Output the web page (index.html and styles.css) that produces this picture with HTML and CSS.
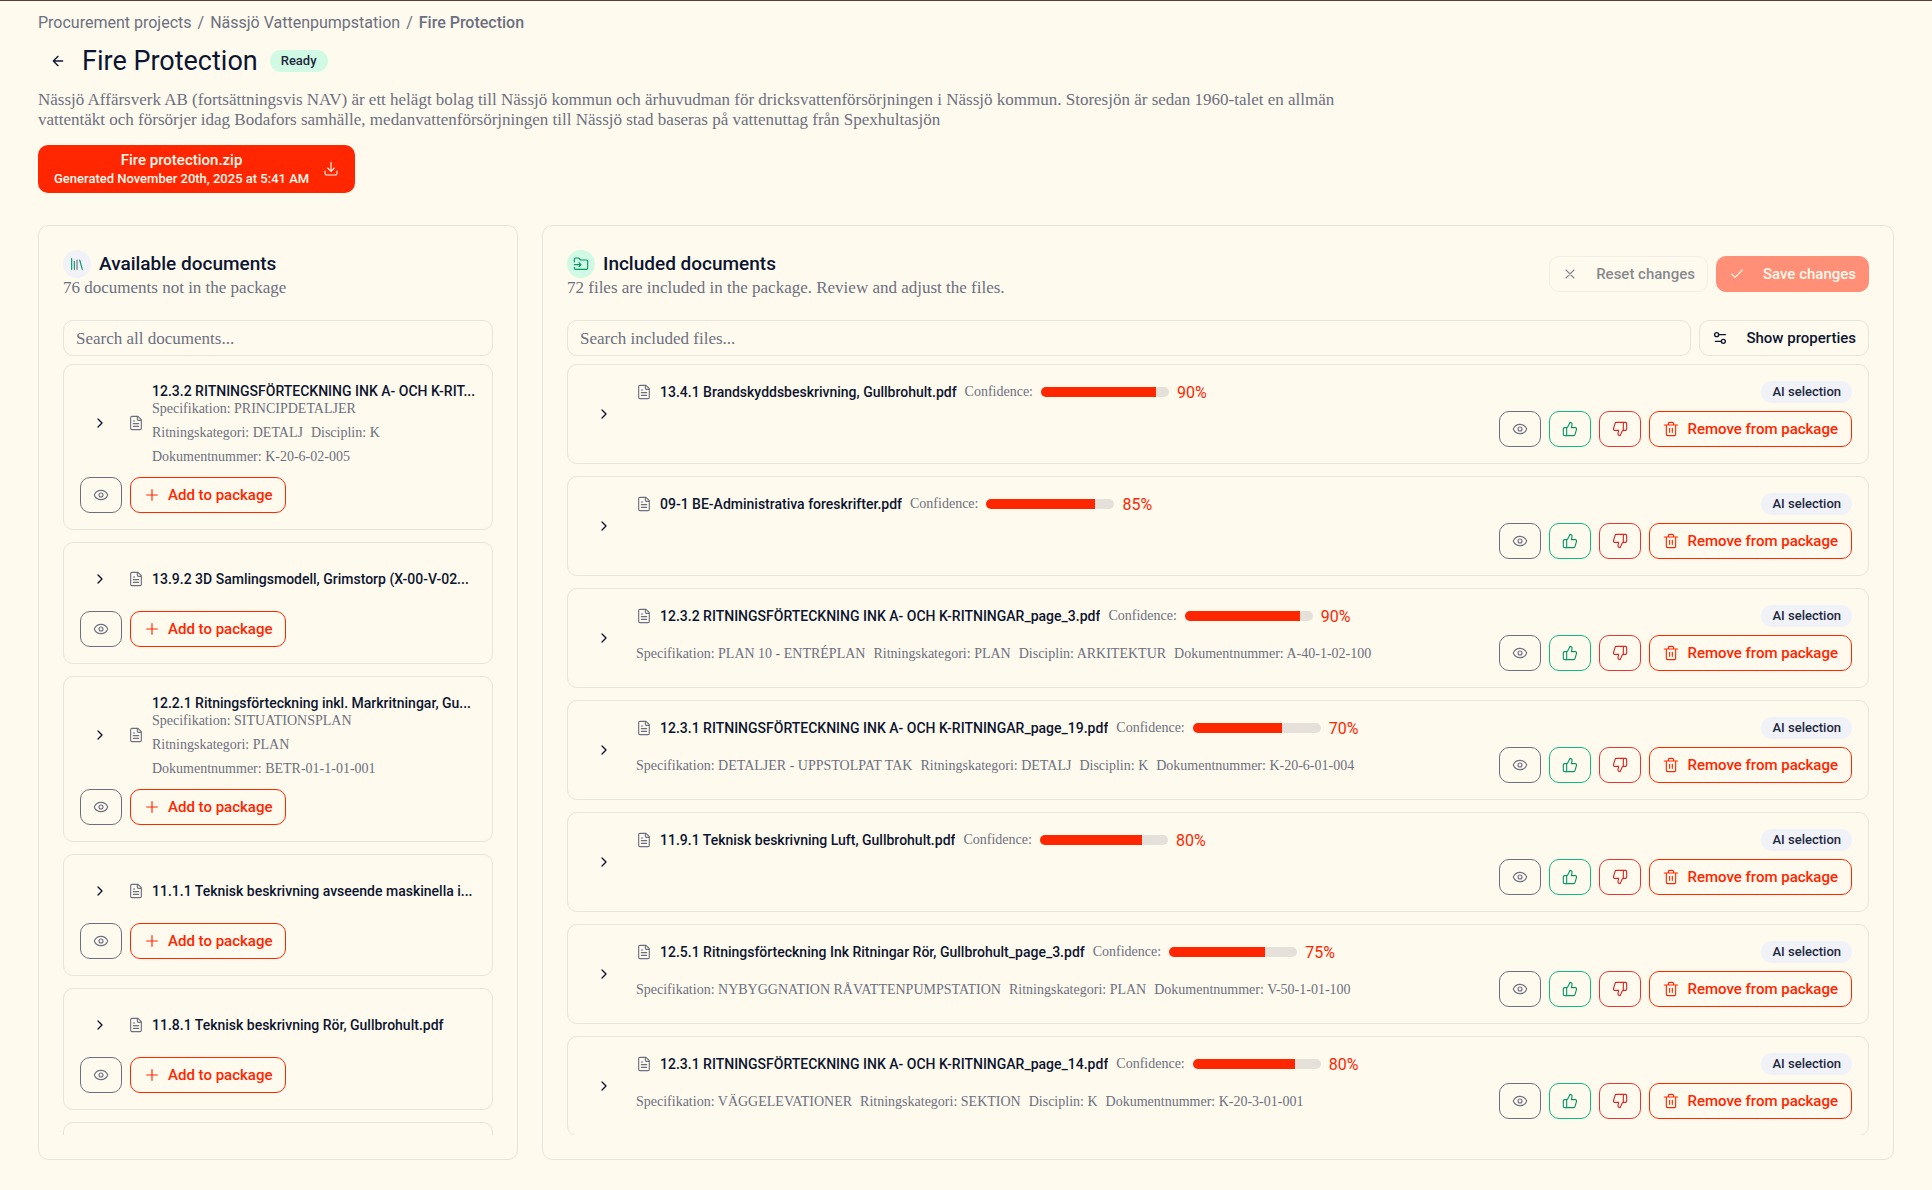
FILE: index.html
```html
<!DOCTYPE html>
<html lang="en">
<head>
    <meta charset="utf-8">
    <meta name="viewport" content="width=device-width, initial-scale=1.0">
    <title>Fire Protection</title>
    <link rel="stylesheet" href="styles.css">
</head>
<body>

<!-- icon sprite -->
<svg class="sprite" aria-hidden="true">
    <symbol id="i-back" viewBox="0 0 24 24"><path d="m12 19-7-7 7-7M19 12H5"/></symbol>
    <symbol id="i-download" viewBox="0 0 24 24"><path d="M3 15v3.500a2.500 2.500 0 0 0 2.500 2.500h13a2.500 2.500 0 0 0 2.500-2.500V15M7 10.500l5 5 5-5M12 15V2"/></symbol>
    <symbol id="i-library" viewBox="0 0 24 24"><path d="m16 6 4 14M8 8v12M4 4v16"/><path d="M12 6v14" stroke="#6b7080"/></symbol>
    <symbol id="i-folder" viewBox="0 0 24 24"><path d="M2 9V5a2 2 0 0 1 2-2h3.900a2 2 0 0 1 1.690.900l.810 1.200a2 2 0 0 0 1.670.900H20a2 2 0 0 1 2 2v10a2 2 0 0 1-2 2H4a2 2 0 0 1-2-2v-1M2 13h10M9 16l3-3-3-3"/></symbol>
    <symbol id="i-x" viewBox="0 0 24 24"><path d="M18 6 6 18M6 6l12 12"/></symbol>
    <symbol id="i-check" viewBox="0 0 24 24"><path d="M20 6 9 17l-5-5"/></symbol>
    <symbol id="i-settings" viewBox="0 0 24 24"><path d="M20 7h-9M14 17H5"/><circle cx="17" cy="17" r="3"/><circle cx="7" cy="7" r="3"/></symbol>
    <symbol id="i-chevron" viewBox="0 0 24 24"><path d="m9 18 6-6-6-6"/></symbol>
    <symbol id="i-file" viewBox="0 0 24 24"><path d="M15 2H6a2 2 0 0 0-2 2v16a2 2 0 0 0 2 2h12a2 2 0 0 0 2-2V7ZM14 2v4a2 2 0 0 0 2 2h4M10 9H8M16 13H8M16 17H8"/></symbol>
    <symbol id="i-eye" viewBox="0 0 24 24"><path d="M2.060 12.350a1 1 0 0 1 0-.700 10.750 10.750 0 0 1 19.880 0 1 1 0 0 1 0 .700 10.750 10.750 0 0 1-19.880 0"/><circle cx="12" cy="12" r="3"/></symbol>
    <symbol id="i-plus" viewBox="0 0 24 24"><path d="M4 12h16M12 4v16"/></symbol>
    <symbol id="i-up" viewBox="0 0 24 24"><path d="M7 10v12M15 5.880 14 10h5.830a2 2 0 0 1 1.920 2.560l-2.330 8A2 2 0 0 1 17.500 22H4a2 2 0 0 1-2-2v-8a2 2 0 0 1 2-2h2.760a2 2 0 0 0 1.790-1.110L12 2a3.130 3.130 0 0 1 3 3.880Z"/></symbol>
    <symbol id="i-down" viewBox="0 0 24 24"><path d="M17 14V2M9 18.120 10 14H4.170a2 2 0 0 1-1.920-2.560l2.330-8A2 2 0 0 1 6.500 2H20a2 2 0 0 1 2 2v8a2 2 0 0 1-2 2h-2.760a2 2 0 0 0-1.790 1.110L12 22a3.130 3.130 0 0 1-3-3.880Z"/></symbol>
    <symbol id="i-trash" viewBox="0 0 24 24"><path d="M2 6h20M19 6v14a2 2 0 0 1-2 2H7a2 2 0 0 1-2-2V6M8 6V4a2 2 0 0 1 2-2h4a2 2 0 0 1 2 2v2M10 11v6M14 11v6"/></symbol>
</svg>

<div class="page">
    <nav class="breadcrumb" aria-label="Breadcrumb">
        <a href="#">Procurement projects</a>
        <span>/</span>
        <a href="#">Nässjö Vattenpumpstation</a>
        <span>/</span>
        <span class="current">Fire Protection</span>
    </nav>

    <header class="page-head">
        <button class="icon-btn" aria-label="Back"><svg class="icon"><use href="#i-back"/></svg></button>
        <h1>Fire Protection</h1>
        <span class="badge ready">Ready</span>
    </header>

    <p class="intro">Nässjö Affärsverk AB (fortsättningsvis NAV) är ett helägt bolag till Nässjö kommun och ärhuvudman för dricksvattenförsörjningen i Nässjö kommun. Storesjön är sedan 1960-talet en allmän vattentäkt och försörjer idag Bodafors samhälle, medanvattenförsörjningen till Nässjö stad baseras på vattenuttag från Spexhultasjön</p>

    <button class="zip">
        <span class="zip-text">
            <span class="zip-name">Fire protection.zip</span>
            <span class="zip-date">Generated November 20th, 2025 at 5:41 AM</span>
        </span>
        <svg class="icon"><use href="#i-download"/></svg>
    </button>

    <main class="panels">
        <section class="panel">
            <div class="panel-head">
                <div>
                    <h2><span class="circle"><svg class="icon"><use href="#i-library"/></svg></span>Available documents</h2>
                    <p>76 documents not in the package</p>
                </div>
            </div>
            <div class="tools">
                <input class="search" type="text" placeholder="Search all documents..." aria-label="Search all documents">
            </div>
            <div class="list">
                <article class="card">
                    <div class="doc">
                        <button class="icon-btn" aria-label="Expand"><svg class="icon"><use href="#i-chevron"/></svg></button>
                        <svg class="icon file"><use href="#i-file"/></svg>
                        <div class="doc-text">
                            <h3>12.3.2 RITNINGSFÖRTECKNING INK A- OCH K-RIT...</h3>
                            <div class="meta">
                                <span>Specifikation: PRINCIPDETALJER</span>
                                <span>Ritningskategori: DETALJ</span>
                                <span>Disciplin: K</span>
                                <span>Dokumentnummer: K-20-6-02-005</span>
                            </div>
                        </div>
                    </div>
                    <div class="actions">
                        <button class="btn view" aria-label="Preview"><svg class="icon"><use href="#i-eye"/></svg></button>
                        <button class="btn primary"><svg class="icon"><use href="#i-plus"/></svg>Add to package</button>
                    </div>
                </article>
                <article class="card">
                    <div class="doc">
                        <button class="icon-btn" aria-label="Expand"><svg class="icon"><use href="#i-chevron"/></svg></button>
                        <svg class="icon file"><use href="#i-file"/></svg>
                        <div class="doc-text">
                            <h3>13.9.2 3D Samlingsmodell, Grimstorp (X-00-V-02...</h3>
                        </div>
                    </div>
                    <div class="actions">
                        <button class="btn view" aria-label="Preview"><svg class="icon"><use href="#i-eye"/></svg></button>
                        <button class="btn primary"><svg class="icon"><use href="#i-plus"/></svg>Add to package</button>
                    </div>
                </article>
                <article class="card">
                    <div class="doc">
                        <button class="icon-btn" aria-label="Expand"><svg class="icon"><use href="#i-chevron"/></svg></button>
                        <svg class="icon file"><use href="#i-file"/></svg>
                        <div class="doc-text">
                            <h3>12.2.1 Ritningsförteckning inkl. Markritningar, Gu...</h3>
                            <div class="meta">
                                <span>Specifikation: SITUATIONSPLAN</span>
                                <span>Ritningskategori: PLAN</span>
                                <span>Dokumentnummer: BETR-01-1-01-001</span>
                            </div>
                        </div>
                    </div>
                    <div class="actions">
                        <button class="btn view" aria-label="Preview"><svg class="icon"><use href="#i-eye"/></svg></button>
                        <button class="btn primary"><svg class="icon"><use href="#i-plus"/></svg>Add to package</button>
                    </div>
                </article>
                <article class="card">
                    <div class="doc">
                        <button class="icon-btn" aria-label="Expand"><svg class="icon"><use href="#i-chevron"/></svg></button>
                        <svg class="icon file"><use href="#i-file"/></svg>
                        <div class="doc-text">
                            <h3>11.1.1 Teknisk beskrivning avseende maskinella i...</h3>
                        </div>
                    </div>
                    <div class="actions">
                        <button class="btn view" aria-label="Preview"><svg class="icon"><use href="#i-eye"/></svg></button>
                        <button class="btn primary"><svg class="icon"><use href="#i-plus"/></svg>Add to package</button>
                    </div>
                </article>
                <article class="card">
                    <div class="doc">
                        <button class="icon-btn" aria-label="Expand"><svg class="icon"><use href="#i-chevron"/></svg></button>
                        <svg class="icon file"><use href="#i-file"/></svg>
                        <div class="doc-text">
                            <h3>11.8.1 Teknisk beskrivning Rör, Gullbrohult.pdf</h3>
                        </div>
                    </div>
                    <div class="actions">
                        <button class="btn view" aria-label="Preview"><svg class="icon"><use href="#i-eye"/></svg></button>
                        <button class="btn primary"><svg class="icon"><use href="#i-plus"/></svg>Add to package</button>
                    </div>
                </article>
                <article class="card"></article>
            </div>
        </section>

        <section class="panel">
            <div class="panel-head">
                <div>
                    <h2><span class="circle green"><svg class="icon"><use href="#i-folder"/></svg></span>Included documents</h2>
                    <p>72 files are included in the package. Review and adjust the files.</p>
                </div>
                <div class="actions">
                    <button class="btn wide" disabled><svg class="icon"><use href="#i-x"/></svg>Reset changes</button>
                    <button class="btn wide save" disabled><svg class="icon"><use href="#i-check"/></svg>Save changes</button>
                </div>
            </div>
            <div class="tools">
                <input class="search" type="text" placeholder="Search included files..." aria-label="Search included files">
                <button class="btn wide"><svg class="icon bold"><use href="#i-settings"/></svg>Show properties</button>
            </div>
            <div class="list">
                <article class="card row">
                    <button class="icon-btn" aria-label="Expand"><svg class="icon"><use href="#i-chevron"/></svg></button>
                    <div class="info">
                        <div class="name">
                            <svg class="icon file"><use href="#i-file"/></svg>
                            <h3>13.4.1 Brandskyddsbeskrivning, Gullbrohult.pdf</h3>
                            <span class="conf">Confidence:</span>
                            <span class="bar"><span class="fill" style="width: 90%"></span></span>
                            <span class="pct">90%</span>
                        </div>
                    </div>
                    <div class="side">
                        <span class="badge">AI selection</span>
                        <div class="actions">
                            <button class="btn view" aria-label="Preview"><svg class="icon"><use href="#i-eye"/></svg></button>
                            <button class="btn up" aria-label="Good match"><svg class="icon"><use href="#i-up"/></svg></button>
                            <button class="btn down" aria-label="Bad match"><svg class="icon"><use href="#i-down"/></svg></button>
                            <button class="btn primary"><svg class="icon"><use href="#i-trash"/></svg>Remove from package</button>
                        </div>
                    </div>
                </article>
                <article class="card row">
                    <button class="icon-btn" aria-label="Expand"><svg class="icon"><use href="#i-chevron"/></svg></button>
                    <div class="info">
                        <div class="name">
                            <svg class="icon file"><use href="#i-file"/></svg>
                            <h3>09-1 BE-Administrativa foreskrifter.pdf</h3>
                            <span class="conf">Confidence:</span>
                            <span class="bar"><span class="fill" style="width: 85%"></span></span>
                            <span class="pct">85%</span>
                        </div>
                    </div>
                    <div class="side">
                        <span class="badge">AI selection</span>
                        <div class="actions">
                            <button class="btn view" aria-label="Preview"><svg class="icon"><use href="#i-eye"/></svg></button>
                            <button class="btn up" aria-label="Good match"><svg class="icon"><use href="#i-up"/></svg></button>
                            <button class="btn down" aria-label="Bad match"><svg class="icon"><use href="#i-down"/></svg></button>
                            <button class="btn primary"><svg class="icon"><use href="#i-trash"/></svg>Remove from package</button>
                        </div>
                    </div>
                </article>
                <article class="card row">
                    <button class="icon-btn" aria-label="Expand"><svg class="icon"><use href="#i-chevron"/></svg></button>
                    <div class="info">
                        <div class="name">
                            <svg class="icon file"><use href="#i-file"/></svg>
                            <h3>12.3.2 RITNINGSFÖRTECKNING INK A- OCH K-RITNINGAR_page_3.pdf</h3>
                            <span class="conf">Confidence:</span>
                            <span class="bar"><span class="fill" style="width: 90%"></span></span>
                            <span class="pct">90%</span>
                        </div>
                        <div class="meta">
                            <span>Specifikation: PLAN 10 - ENTRÉPLAN</span>
                            <span>Ritningskategori: PLAN</span>
                            <span>Disciplin: ARKITEKTUR</span>
                            <span>Dokumentnummer: A-40-1-02-100</span>
                        </div>
                    </div>
                    <div class="side">
                        <span class="badge">AI selection</span>
                        <div class="actions">
                            <button class="btn view" aria-label="Preview"><svg class="icon"><use href="#i-eye"/></svg></button>
                            <button class="btn up" aria-label="Good match"><svg class="icon"><use href="#i-up"/></svg></button>
                            <button class="btn down" aria-label="Bad match"><svg class="icon"><use href="#i-down"/></svg></button>
                            <button class="btn primary"><svg class="icon"><use href="#i-trash"/></svg>Remove from package</button>
                        </div>
                    </div>
                </article>
                <article class="card row">
                    <button class="icon-btn" aria-label="Expand"><svg class="icon"><use href="#i-chevron"/></svg></button>
                    <div class="info">
                        <div class="name">
                            <svg class="icon file"><use href="#i-file"/></svg>
                            <h3>12.3.1 RITNINGSFÖRTECKNING INK A- OCH K-RITNINGAR_page_19.pdf</h3>
                            <span class="conf">Confidence:</span>
                            <span class="bar"><span class="fill" style="width: 70%"></span></span>
                            <span class="pct">70%</span>
                        </div>
                        <div class="meta">
                            <span>Specifikation: DETALJER - UPPSTOLPAT TAK</span>
                            <span>Ritningskategori: DETALJ</span>
                            <span>Disciplin: K</span>
                            <span>Dokumentnummer: K-20-6-01-004</span>
                        </div>
                    </div>
                    <div class="side">
                        <span class="badge">AI selection</span>
                        <div class="actions">
                            <button class="btn view" aria-label="Preview"><svg class="icon"><use href="#i-eye"/></svg></button>
                            <button class="btn up" aria-label="Good match"><svg class="icon"><use href="#i-up"/></svg></button>
                            <button class="btn down" aria-label="Bad match"><svg class="icon"><use href="#i-down"/></svg></button>
                            <button class="btn primary"><svg class="icon"><use href="#i-trash"/></svg>Remove from package</button>
                        </div>
                    </div>
                </article>
                <article class="card row">
                    <button class="icon-btn" aria-label="Expand"><svg class="icon"><use href="#i-chevron"/></svg></button>
                    <div class="info">
                        <div class="name">
                            <svg class="icon file"><use href="#i-file"/></svg>
                            <h3>11.9.1 Teknisk beskrivning Luft, Gullbrohult.pdf</h3>
                            <span class="conf">Confidence:</span>
                            <span class="bar"><span class="fill" style="width: 80%"></span></span>
                            <span class="pct">80%</span>
                        </div>
                    </div>
                    <div class="side">
                        <span class="badge">AI selection</span>
                        <div class="actions">
                            <button class="btn view" aria-label="Preview"><svg class="icon"><use href="#i-eye"/></svg></button>
                            <button class="btn up" aria-label="Good match"><svg class="icon"><use href="#i-up"/></svg></button>
                            <button class="btn down" aria-label="Bad match"><svg class="icon"><use href="#i-down"/></svg></button>
                            <button class="btn primary"><svg class="icon"><use href="#i-trash"/></svg>Remove from package</button>
                        </div>
                    </div>
                </article>
                <article class="card row">
                    <button class="icon-btn" aria-label="Expand"><svg class="icon"><use href="#i-chevron"/></svg></button>
                    <div class="info">
                        <div class="name">
                            <svg class="icon file"><use href="#i-file"/></svg>
                            <h3>12.5.1 Ritningsförteckning Ink Ritningar Rör, Gullbrohult_page_3.pdf</h3>
                            <span class="conf">Confidence:</span>
                            <span class="bar"><span class="fill" style="width: 75%"></span></span>
                            <span class="pct">75%</span>
                        </div>
                        <div class="meta">
                            <span>Specifikation: NYBYGGNATION RÅVATTENPUMPSTATION</span>
                            <span>Ritningskategori: PLAN</span>
                            <span>Dokumentnummer: V-50-1-01-100</span>
                        </div>
                    </div>
                    <div class="side">
                        <span class="badge">AI selection</span>
                        <div class="actions">
                            <button class="btn view" aria-label="Preview"><svg class="icon"><use href="#i-eye"/></svg></button>
                            <button class="btn up" aria-label="Good match"><svg class="icon"><use href="#i-up"/></svg></button>
                            <button class="btn down" aria-label="Bad match"><svg class="icon"><use href="#i-down"/></svg></button>
                            <button class="btn primary"><svg class="icon"><use href="#i-trash"/></svg>Remove from package</button>
                        </div>
                    </div>
                </article>
                <article class="card row">
                    <button class="icon-btn" aria-label="Expand"><svg class="icon"><use href="#i-chevron"/></svg></button>
                    <div class="info">
                        <div class="name">
                            <svg class="icon file"><use href="#i-file"/></svg>
                            <h3>12.3.1 RITNINGSFÖRTECKNING INK A- OCH K-RITNINGAR_page_14.pdf</h3>
                            <span class="conf">Confidence:</span>
                            <span class="bar"><span class="fill" style="width: 80%"></span></span>
                            <span class="pct">80%</span>
                        </div>
                        <div class="meta">
                            <span>Specifikation: VÄGGELEVATIONER</span>
                            <span>Ritningskategori: SEKTION</span>
                            <span>Disciplin: K</span>
                            <span>Dokumentnummer: K-20-3-01-001</span>
                        </div>
                    </div>
                    <div class="side">
                        <span class="badge">AI selection</span>
                        <div class="actions">
                            <button class="btn view" aria-label="Preview"><svg class="icon"><use href="#i-eye"/></svg></button>
                            <button class="btn up" aria-label="Good match"><svg class="icon"><use href="#i-up"/></svg></button>
                            <button class="btn down" aria-label="Bad match"><svg class="icon"><use href="#i-down"/></svg></button>
                            <button class="btn primary"><svg class="icon"><use href="#i-trash"/></svg>Remove from package</button>
                        </div>
                    </div>
                </article>
            </div>
        </section>
    </main>
</div>

</body>
</html>
```
FILE: styles.css
```css
* {
    box-sizing: border-box;
}
body {
    margin: 0;
    background: #fffaee;
    color: #0c1530;
    font-family: "Roboto", "Liberation Sans", sans-serif;
    font-size: 15px;
}
h1, h2, h3, p {
    margin: 0;
    font-weight: 500;
}
button {
    font: inherit;
    color: inherit;
    background: none;
    border: 0;
    padding: 0;
    cursor: pointer;
}
.sprite {
    display: none;
}
.icon {
    width: 16px;
    height: 16px;
    flex: none;
    fill: none;
    stroke: currentColor;
    stroke-width: 1.7;
    stroke-linecap: round;
    stroke-linejoin: round;
}
.icon.bold, .icon-btn .icon {
    stroke-width: 2;
}

/* page: one screen high, the two lists take what is left */
.page {
    display: flex;
    flex-direction: column;
    height: 100vh;
    padding: 12px 38px 30px;
    border-top: 1px solid #55413c;
}
.breadcrumb {
    display: flex;
    gap: 6px;
    font-size: 16px;
    line-height: 20px;
    color: #6b7080;
}
.breadcrumb a {
    color: inherit;
    text-decoration: none;
}
.breadcrumb .current {
    font-weight: 500;
}
.page-head {
    display: flex;
    align-items: center;
    gap: 12px;
    margin-top: 8px;
}
.page-head .icon-btn {
    margin-right: -8px;
}
h1 {
    font-size: 27px;
    line-height: 36px;
    font-weight: 400;
}
.icon-btn {
    display: flex;
    align-items: center;
    justify-content: center;
    width: 40px;
    height: 40px;
    flex: none;
}
.badge {
    padding: 0 11px;
    border-radius: 11px;
    background: #f0f2f7;
    color: #1e2740;
    font-size: 13px;
    font-weight: 500;
    line-height: 22px;
}
.ready {
    background: #d1fae5;
}
.intro {
    max-width: 1312px;
    margin-top: 9px;
    color: #6b7080;
    font-family: "Liberation Serif", serif;
    font-size: 17px;
    font-weight: 400;
    line-height: 20px;
}
.zip {
    display: flex;
    align-items: center;
    align-self: flex-start;
    gap: 14px;
    height: 48px;
    margin-top: 15px;
    padding: 0 16px;
    border-radius: 10px;
    background: #ff2600;
    color: #fffaee;
    font-weight: 500;
    text-align: center;
}
.zip-text {
    display: flex;
    flex-direction: column;
}
.zip-name {
    font-size: 15px;
    line-height: 20px;
}
.zip-date {
    font-size: 13px;
    line-height: 18px;
}

/* panels */
.panels {
    display: grid;
    grid-template-columns: 480px 1fr;
    gap: 24px;
    flex: 1;
    min-height: 0;
    margin-top: 32px;
}
.panel {
    display: flex;
    flex-direction: column;
    min-width: 0;
    min-height: 0;
    padding: 24px;
    border: 1px solid #e8e4da;
    border-radius: 10px;
}
.panel-head {
    display: flex;
    align-items: center;
    justify-content: space-between;
    margin-bottom: 22px;
}
h2 {
    display: flex;
    align-items: center;
    gap: 8px;
    font-size: 19px;
    line-height: 28px;
}
.panel-head p {
    color: #6b7080;
    font-family: "Liberation Serif", serif;
    font-size: 17px;
    font-weight: 400;
    line-height: 20px;
}
.circle {
    display: flex;
    align-items: center;
    justify-content: center;
    width: 28px;
    height: 28px;
    border-radius: 50%;
    background: #f0f2f7;
    color: #059669;
}
.circle.green {
    background: #d1fae5;
}
.tools {
    display: flex;
    gap: 8px;
    margin-bottom: 8px;
}
.search {
    flex: 1;
    min-width: 0;
    height: 36px;
    padding: 2px 12px 0;
    border: 1px solid #e8e4da;
    border-radius: 10px;
    background: none;
    color: #0c1530;
    font-family: "Liberation Serif", serif;
    font-size: 17px;
}
.search::placeholder {
    color: #6b7080;
    opacity: 1;
}

/* buttons */
.actions {
    display: flex;
    gap: 8px;
}
.btn {
    display: flex;
    align-items: center;
    justify-content: center;
    gap: 8px;
    height: 36px;
    padding: 0 12px;
    border: 1px solid #e8e4da;
    border-radius: 10px;
    font-weight: 500;
    white-space: nowrap;
}
.btn.wide {
    gap: 18px;
}
.btn:disabled {
    opacity: .5;
    cursor: default;
}
.save {
    border-color: #ff2600;
    background: #ff2600;
    color: #fffaee;
}
.primary {
    padding: 0 13px;
    border-color: #ff2600;
    color: #ff2600;
}
.view {
    border-color: #6b7080;
    color: #6b7080;
}
.up {
    border-color: #10b981;
    color: #059669;
}
.down {
    border-color: #e53535;
    color: #dc2626;
}

/* cards */
.list {
    display: flex;
    flex-direction: column;
    gap: 12px;
    flex: 1;
    min-height: 0;
    overflow: hidden;
}
.card {
    flex: none;
    min-height: 100px;
    padding: 16px;
    border: 1px solid #e8e4da;
    border-radius: 10px;
}
h3 {
    overflow: hidden;
    font-size: 14px;
    line-height: 20px;
    white-space: nowrap;
    text-overflow: ellipsis;
}
.file {
    color: #6b7080;
}
.doc {
    display: flex;
    align-items: center;
    gap: 8px;
    margin-bottom: 12px;
}
.doc-text {
    flex: 1;
    min-width: 0;
}
.meta {
    display: flex;
    flex-wrap: wrap;
    gap: 8px;
    color: #6b7080;
    font-family: "Liberation Serif", serif;
    font-size: 14px;
    line-height: 16px;
}
.row {
    display: flex;
    align-items: center;
}
.info {
    display: flex;
    flex-direction: column;
    gap: 19px;
    flex: 1;
    min-width: 0;
    align-self: stretch;
    padding-left: 12px;
}
.name {
    display: flex;
    align-items: center;
    gap: 8px;
    height: 22px;
}
.conf {
    color: #6b7080;
    font-family: "Liberation Serif", serif;
    font-size: 14px;
}
.bar {
    width: 128px;
    height: 10px;
    flex: none;
    overflow: hidden;
    border-radius: 5px;
    background: #e5e1da;
}
.fill {
    display: block;
    height: 100%;
    background: #ff2600;
}
.pct {
    color: #ff2600;
    font-size: 16px;
}
.side {
    display: flex;
    flex-direction: column;
    align-items: flex-end;
    gap: 8px;
}
```
